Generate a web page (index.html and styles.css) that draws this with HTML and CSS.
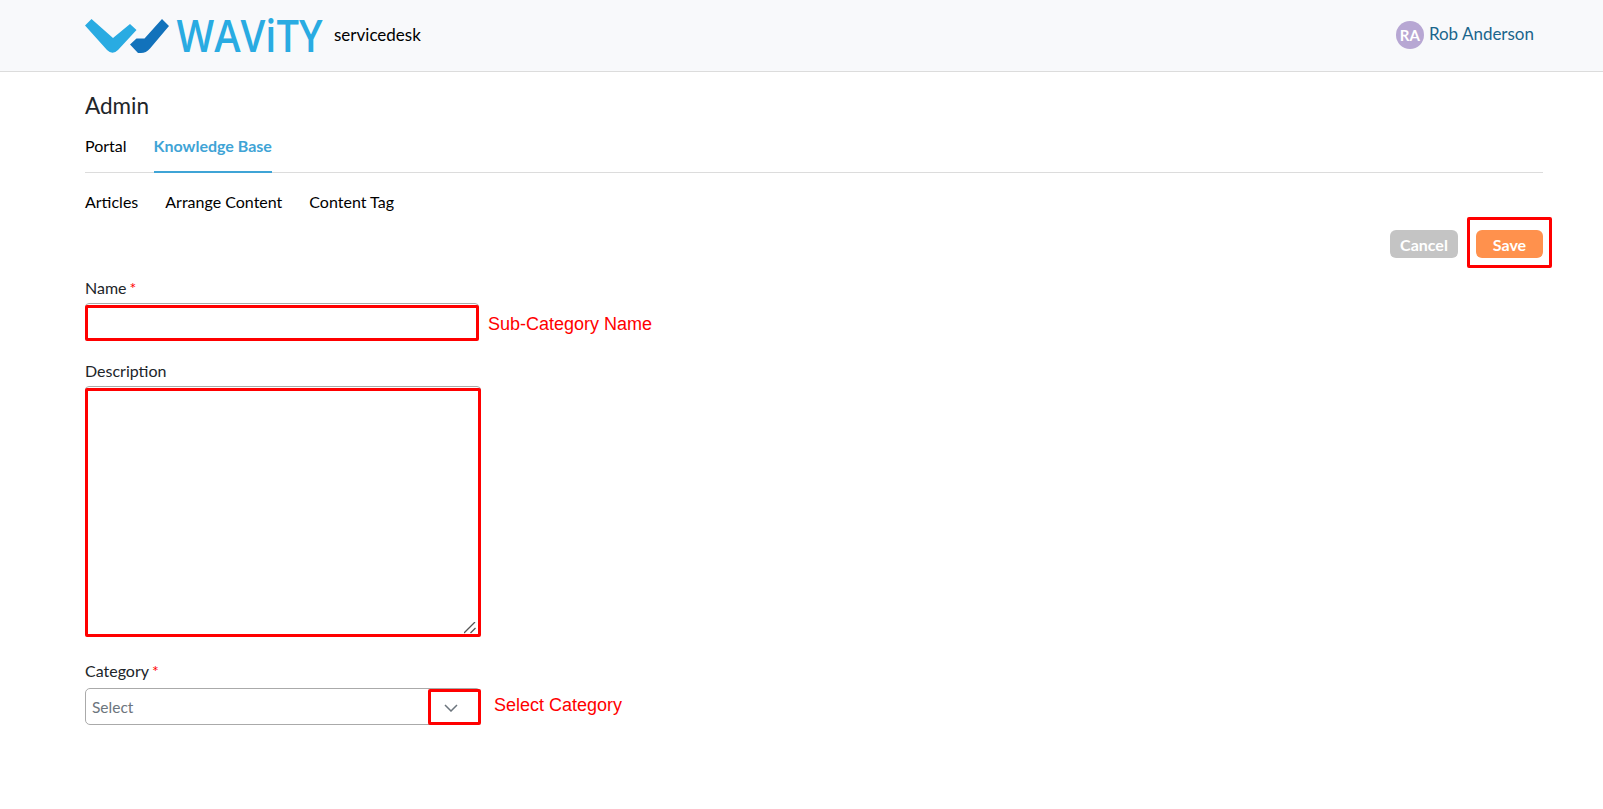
FILE: index.html
```html
<!DOCTYPE html>
<html lang="en">
<head>
<meta charset="utf-8">
<title>Admin</title>
<link rel="stylesheet" href="styles.css">
</head>
<body>
<header class="topbar">
  <div class="brand">
    <svg class="logo" width="240" height="50" viewBox="85 10 240 50" aria-label="Wavity">
      <path class="mark-light" d="M85 24.500 91.500 18 113 37 130 23 136.500 29 118 49Q112.500 54.500 107 49Z"/>
      <path class="mark-dark" d="M130 43.500 136.500 37.500 144.500 37.500 162 18 169 25 150 47.500Q146 52 141 52H138Z"/>
      <text class="wordmark" x="176.500" y="50.500" textLength="146" lengthAdjust="spacingAndGlyphs">WAViTY</text>
    </svg>
    <span class="product">servicedesk</span>
  </div>
  <div class="user">
    <span class="avatar">RA</span>
    <span class="user-name">Rob Anderson</span>
  </div>
</header>

<main class="page">
  <h1 class="title">Admin</h1>
  <nav class="tabs">
    <a class="tab">Portal</a>
    <a class="tab tab-active">Knowledge Base</a>
  </nav>
  <nav class="subnav">
    <a>Articles</a>
    <a>Arrange Content</a>
    <a>Content Tag</a>
  </nav>

  <div class="actions">
    <button class="btn btn-cancel">Cancel</button>
    <span class="save-wrap">
      <button class="btn btn-save">Save</button>
      <span class="mark mark-save"></span>
    </span>
  </div>

  <form class="form">
    <div class="field field-name">
      <label class="label">Name<span class="req">*</span></label>
      <div class="control">
        <input class="input" type="text">
        <span class="mark mark-fill"></span>
        <span class="note note-name">Sub-Category Name</span>
      </div>
    </div>
    <div class="field field-desc">
      <label class="label">Description</label>
      <div class="control">
        <textarea class="textarea"></textarea>
        <span class="mark mark-fill"></span>
        <svg class="grip" width="12" height="12" viewBox="0 0 12 12"><path d="M0 11 11 0M6.500 11 11.500 6"/></svg>
      </div>
    </div>
    <div class="field field-cat">
      <label class="label">Category<span class="req">*</span></label>
      <div class="control">
        <div class="select">
          <span class="placeholder">Select</span>
          <span class="chevron">
            <svg width="14" height="8" viewBox="0 0 14 8"><path d="M1 1l6 6 6-6"/></svg>
          </span>
        </div>
        <span class="mark mark-chevron"></span>
        <span class="note note-category">Select Category</span>
      </div>
    </div>
  </form>
</main>
</body>
</html>
```

FILE: styles.css
```css
* { box-sizing: border-box; }
html, body { margin: 0; padding: 0; }
body {
  font-family: Lato, "Liberation Sans", sans-serif;
  color: #212529;
  background: #fff;
  overflow: hidden;
  height: 809px;
}
.topbar {
  height: 72px;
  background: #f8f9fb;
  border-bottom: 1px solid #dcdcdc;
  padding: 0 69px 0 85px;
  display: flex;
  align-items: center;
  justify-content: space-between;
}
.brand { display: flex; align-items: center; }
.logo { display: block; overflow: visible; }
.mark-light { fill: #29abe2; }
.mark-dark { fill: #1272bb; }
.wordmark { font-family: "Open Sans", sans-serif; font-weight: 600; font-size: 44.500px; fill: #29abe2; }
.product { font-size: 17px; color: #000; margin-left: 9px; margin-bottom: 2px; }
.user { display: flex; align-items: center; gap: 5px; margin-bottom: 2px; }
.avatar {
  width: 28px; height: 28px; border-radius: 50%;
  background: #b7a7d3; color: #fff;
  font-size: 15px; font-weight: 700;
  display: flex; align-items: center; justify-content: center;
}
.user-name { font-size: 17px; color: #1a658c; margin-bottom: 2px; }

.page { padding: 0 60px 0 85px; }
.title { font-size: 22.500px; font-weight: 400; line-height: 28px; margin: 20px 0 0; }
.tabs {
  display: flex; gap: 27px;
  border-bottom: 1px solid #dcdcdc;
  margin-top: 13px;
  height: 40px;
}
.tab { font-size: 16px; color: #000; line-height: 18px; padding-top: 4px; }
.tab-active {
  color: #3fa4d6; font-weight: 700;
  border-bottom: 2px solid #3fa4d6;
  height: 40px;
}
.subnav { display: flex; gap: 27px; margin-top: 20px; font-size: 16px; line-height: 18px; color: #000; }
.actions { display: flex; justify-content: flex-end; gap: 18px; margin-top: 19px; }
.btn {
  width: 68px; height: 28px; border: 0; border-radius: 6px;
  color: #fff; font: 700 16px Lato, sans-serif; padding: 0;
}
.btn-cancel { background: #c4c4c4; }
.btn-save { background: #ff914d; display: block; width: 67px; }
.save-wrap { position: relative; }

.form { margin-top: 20px; }
.field { width: 396px; margin-bottom: 20px; }
.field-desc { margin-bottom: 24px; }
.label { display: block; font-size: 16px; line-height: 20px; margin-bottom: 5px; color: #212529; }
.field-cat .label { margin-bottom: 7px; }
.req { color: #f00; margin-left: 3px; }
.control { position: relative; }
.input, .textarea {
  display: block; width: 100%;
  border: 1px solid #aaa; border-radius: 4px; background: #fff; padding: 0;
}
.input { height: 38px; width: 394px; }
.textarea { height: 251px; resize: none; }
.grip { position: absolute; right: 5px; bottom: 3px; }
.grip path { fill: none; stroke: #555; stroke-width: 1.300; }
.select {
  height: 37px; border: 1px solid #aaa; border-radius: 5px;
  display: flex; align-items: center; justify-content: space-between;
}
.placeholder { font-size: 15.500px; color: #6c757d; padding-left: 6px; }
.chevron { width: 51px; padding-right: 8px; display: flex; justify-content: center; }
.chevron svg { margin-top: 2px; }
.chevron path { fill: none; stroke: #6c757d; stroke-width: 1.500; }

.mark { position: absolute; border: 3px solid #f00; border-radius: 2px; pointer-events: none; }
.mark-fill { inset: 2px 0 0 0; }
.field-name .mark-fill { right: auto; width: 394px; bottom: 0; }
.mark-save { left: -9px; right: -9px; top: -13px; bottom: -10px; }
.mark-chevron { right: 0; width: 53px; top: 1px; bottom: 0; }
.note {
  position: absolute; color: #f00; white-space: nowrap;
  font-family: "Liberation Sans", sans-serif; font-size: 18px; line-height: 22px;
}
.note-name { left: 403px; top: 10px; }
.note-category { left: 409px; top: 6px; }
```
